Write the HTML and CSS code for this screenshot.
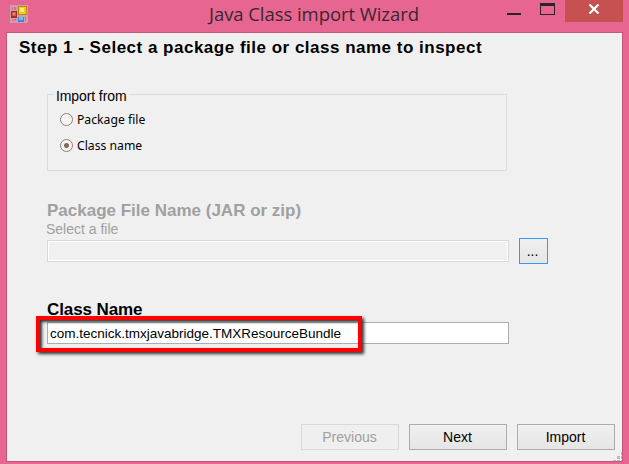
FILE: index.html
```html
<!DOCTYPE html>
<html lang="en">
<head>
<meta charset="utf-8">
<title>Java Class import Wizard</title>
<link rel="stylesheet" href="styles.css">
</head>
<body>
<div class="window">
  <header class="titlebar">
    <svg class="app-icon" width="18" height="18" viewBox="0 0 18 18" shape-rendering="crispEdges">
      <rect width="18" height="18" fill="#c3a3ae"/>
      <path d="M2 2h1v3H2zM4 2h2v3H4zM2 14h1v2H2zM4 14h2v2H4zM15 12h1v4h-1z" fill="#e66691"/>
      <rect x="1" y="6" width="6" height="7" fill="#a92c2a"/>
      <rect x="2" y="7" width="4" height="4" fill="#d4574c"/>
      <rect x="3" y="8" width="2" height="2" fill="#ef8c7c"/>
      <rect x="8" y="1" width="9" height="9" fill="#b58a12"/>
      <rect x="9" y="2" width="7" height="7" fill="#f5c62a"/>
      <rect x="10" y="3" width="4" height="4" fill="#ffe780"/>
      <rect x="8" y="12" width="6" height="5" fill="#4b7fd6"/>
      <rect x="9" y="12" width="4" height="3" fill="#82b2f5"/>
    </svg>
    <h1 class="title">Java Class import Wizard</h1>
    <div class="controls">
      <svg class="minmax" width="50" height="22" viewBox="0 0 50 22" shape-rendering="crispEdges">
        <rect x="0" y="13" width="14" height="2" fill="#2b2329"/>
        <path d="M33 3h15v12H33zM34 6v8h13V6z" fill="#2b2329" fill-rule="evenodd"/>
      </svg>
      <div class="close">
        <svg width="12" height="10" viewBox="0 0 12 10"><path d="M1.500 .5L10.500 9.500M10.500 .5L1.500 9.500" stroke="#fff" stroke-width="2.200"/></svg>
      </div>
    </div>
  </header>
  <main class="client">
    <h2 class="step">Step 1 - Select a package file or class name to inspect</h2>
    <section class="group">
      <span class="legend">Import from</span>
      <div class="option"><span class="radio"></span><span>Package file</span></div>
      <div class="option"><span class="radio checked"></span><span class="option-name">Class name</span></div>
    </section>
    <section class="package">
      <h3 class="label">Package File Name (JAR or zip)</h3>
      <p class="hint">Select a file</p>
      <div class="file-row">
        <div class="field disabled"></div>
        <div class="browse">...</div>
      </div>
    </section>
    <section class="class-section">
      <h3 class="label class-title">Class Name</h3>
      <div class="field value">com.tecnick.tmxjavabridge.TMXResourceBundle</div>
      <div class="highlight"></div>
    </section>
    <footer class="buttons">
      <div class="button off">Previous</div>
      <div class="button">Next</div>
      <div class="button">Import</div>
    </footer>
    <svg class="grip" width="9" height="9" viewBox="0 0 9 9" shape-rendering="crispEdges"><path d="M8 0h1v3H8zM4 4h3v3H4zM8 4h1v3H8zM0 8h3v1H0zM4 8h3v1H4zM8 8h1v1H8z" fill="#bcbcbc"/></svg>
  </main>
</div>
</body>
</html>
```
FILE: styles.css
```css
* { box-sizing: border-box; }
body { margin: 0; overflow: hidden; font-family: "Liberation Sans", Arial, sans-serif; color: #000; }
h1, h2, h3, p { margin: 0; }
.window { width: 629px; height: 464px; padding: 0 6px 2px; background: #e66691; }
.titlebar { display: flex; height: 32px; }
.app-icon { margin: 5px 0 0 4px; flex: none; }
.title { margin-left: 181px; width: 230px; font: 400 18.500px/28px "Open Sans", sans-serif; letter-spacing: -.06px; color: #3a2630; white-space: nowrap; }
.controls { display: flex; margin-left: 68px; }
.minmax { flex: none; width: 50px; }
.close { flex: none; display: flex; justify-content: center; width: 58px; height: 22px; margin-left: 8px; padding-top: 4px; background: #c75050; }
.client { position: relative; width: 617px; height: 430px; padding: 5px 0 0 40px; border: 1px solid #c4567d; background: #f0f0f0; }
.step { margin-left: -28px; font-size: 17px; line-height: 20px; letter-spacing: .5px; white-space: nowrap; }
.group { position: relative; width: 460px; height: 77px; margin-top: 36px; padding: 18px 0 0 12px; border: 1px solid #dcdcdc; }
.legend { position: absolute; left: 6px; top: -9px; padding: 0 3px 0 2px; background: #f0f0f0; font-size: 14px; line-height: 20px; letter-spacing: -.1px; white-space: nowrap; }
.option { display: flex; align-items: center; height: 13px; margin-bottom: 13px; font: 12.200px/13px "Noto Sans", sans-serif; white-space: nowrap; }
.radio { width: 13px; height: 13px; margin-right: 4px; border: 1px solid #8e7f76; border-radius: 50%; background: #f6f4f0; }
.checked { background: radial-gradient(circle, #80695e 0 2px, #f6f4f0 3px); }
.label { font-size: 17px; line-height: 20px; white-space: nowrap; }
.package { margin-top: 30px; color: #a0a0a0; }
.hint { margin: -1px 0 0 -1px; font-size: 14px; line-height: 18px; }
.file-row { display: flex; align-items: center; gap: 10px; height: 26px; }
.field { width: 462px; height: 22px; border: 1px solid #abadb3; background: #fff; }
.disabled { border-color: #d9d9d9; background: #f0f0f0; box-shadow: inset 0 0 0 1px #fff; }
.browse { width: 29px; height: 26px; padding-right: 2px; border: 1px solid #3399ff; background: linear-gradient(#f0f0f0, #e5e5e5); color: #000; font-size: 14px; line-height: 25px; text-align: center; }
.class-section { position: relative; margin-top: 35px; }
.class-title { height: 23px; line-height: 22px; letter-spacing: -.1px; }
.value { padding-left: 2px; font-size: 13.500px; line-height: 21px; }
.highlight { position: absolute; left: -11px; top: 17px; width: 326px; height: 36px; border: 4px solid #f00; box-shadow: 2px 2px 3px #333, inset 2px 2px 3px #333; }
.buttons { display: flex; gap: 10px; margin: 80px 0 0 254px; }
.button { width: 98px; height: 26px; padding-right: 1px; border: 1px solid #acacac; background: linear-gradient(#f0f0f0, #e5e5e5); font-size: 14px; line-height: 25px; text-align: center; }
.off { border-color: #d9d9d9; background: #efefef; color: #a0a0a0; }
.grip { position: absolute; right: 0; bottom: 0; }
```
